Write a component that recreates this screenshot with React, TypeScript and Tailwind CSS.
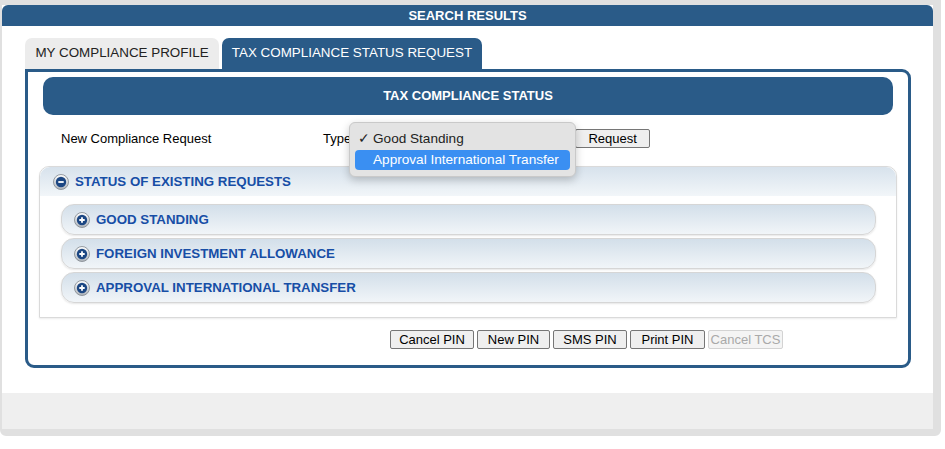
import React from "react";

const REQUESTS = ["GOOD STANDING", "FOREIGN INVESTMENT ALLOWANCE", "APPROVAL INTERNATIONAL TRANSFER"];
const PIN_BUTTONS = [
  { label: "Cancel PIN", w: "w-[84px]" },
  { label: "New PIN", w: "w-[73px]" },
  { label: "SMS PIN", w: "w-[74px]" },
  { label: "Print PIN", w: "w-[75px]" },
];

function ToggleIcon({ open }: { open: boolean }) {
  const id = open ? "ringOpen" : "ringShut";
  return (
    <svg viewBox="0 0 16 16" width="16" height="16" className="w-[16px] h-[16px] flex-shrink-0">
      <defs>
        <linearGradient id={id} x1="0" y1="0" x2="0" y2="1">
          <stop offset="0" stopColor="#ffffff" />
          <stop offset="1" stopColor="#aeb4bb" />
        </linearGradient>
      </defs>
      <circle cx="8" cy="8" r="7.5" fill={`url(#${id})`} stroke="#7f858c" strokeWidth="0.8" />
      <circle cx="8" cy="8" r="5.2" fill="#1c4783" />
      <path d={open ? "M5.3 8h5.4" : "M5.3 8h5.4M8 5.3v5.4"} stroke="#fff" strokeWidth="1.8" />
    </svg>
  );
}

function Btn({ label, disabled, w }: { label: string; disabled?: boolean; w: string }) {
  return (
    <button
      disabled={disabled}
      className={`${w} h-[19px] text-[13px] leading-none rounded-[2px] border ${
        disabled ? "border-[#d3d3d3] text-[#a9a9a9] bg-[#f4f4f4]" : "border-[#767676] text-black bg-[#efefef]"
      }`}
    >
      {label}
    </button>
  );
}

export default function App() {
  return (
    <div className="bg-white" style={{ fontFamily: "'Liberation Sans', Arial, sans-serif" }}>
      <div className="w-[941px] border-t-[5px] border-l-2 border-r-8 border-b-[7px] border-[#e0e0e0] rounded-b-[6px]">
        <div className="h-[21px] bg-[#2a5b88] rounded-t-[6px] flex items-center justify-center text-white text-[13px] font-bold">
          SEARCH RESULTS
        </div>

        <div className="px-[23px] pt-[12px] pb-[25px] bg-white">
          {/* tabs */}
          <div className="flex gap-[3px]">
            <div className="w-[194px] h-[31px] bg-[#ececec] rounded-t-[7px] flex items-center justify-center text-[13.4px] text-[#222]">
              MY COMPLIANCE PROFILE
            </div>
            <div className="w-[260px] h-[31px] bg-[#2a5b88] rounded-t-[7px] flex items-center justify-center text-[13.4px] text-white">
              TAX COMPLIANCE STATUS REQUEST
            </div>
          </div>

          {/* panel */}
          <div className="w-[886px] h-[299px] border-[3px] border-[#2a5b88] rounded-b-[9px] rounded-tr-[9px] px-[11px] pt-[5px]">
            <div className="mx-[4px] h-[38px] bg-[#2a5b88] rounded-[10px] flex items-center justify-center text-white text-[13px] font-bold">
              TAX COMPLIANCE STATUS
            </div>

            <div className="relative mt-[14px] h-[19px] flex items-center text-[13px] text-black">
              <span className="ml-[22px] w-[262px]">New Compliance Request</span>
              <span>Type</span>
              <div className="ml-[6px] w-[218px] h-[19px]" />
              <Btn label="Request" w="w-[75px]" />
              {/* open select menu */}
              <div className="absolute left-[310px] top-[-7px] w-[227px] h-[55px] bg-[#e3e3e3] border border-[#c9c9c9] rounded-[6px] shadow-[0_3px_8px_rgba(0,0,0,0.22)] px-[5px] pt-[6px] text-[13.6px]">
                <div className="h-[21px] flex items-center pl-[3px] text-[#222]">
                  <span className="w-[15px]">✓</span>Good Standing
                </div>
                <div className="h-[20px] flex items-center pl-[18px] bg-[#3a8ff2] rounded-[4px] text-white">
                  Approval International Transfer
                </div>
              </div>
            </div>

            {/* accordion */}
            <div className="mt-[18px] h-[152px] border border-[#dadada] rounded-t-[10px] shadow-[0_1px_2px_rgba(0,0,0,0.08)]">
              <div className="h-[29px] rounded-t-[10px] bg-gradient-to-b from-[#d7e2ec] to-[#f2f6f9] flex items-center gap-[6px] pl-[13px]">
                <ToggleIcon open />
                <span className="text-[13.3px] font-bold text-[#174ea6]">STATUS OF EXISTING REQUESTS</span>
              </div>
              <div className="pl-[21px] pr-[20px] pt-[8px] flex flex-col gap-[3px]">
                {REQUESTS.map((r) => (
                  <div
                    key={r}
                    className="h-[31px] rounded-[13px] border border-[#d6d6d6] bg-gradient-to-b from-[#d3dfea] to-[#f1f5f8] shadow-[0_1px_2px_rgba(0,0,0,0.1)] flex items-center gap-[6px] pl-[12px]"
                  >
                    <ToggleIcon open={false} />
                    <span className="text-[13.3px] font-bold text-[#174ea6]">{r}</span>
                  </div>
                ))}
              </div>
            </div>

            {/* pin buttons */}
            <div className="mt-[12px] ml-[351px] flex gap-[3px]">
              {PIN_BUTTONS.map((b) => (
                <Btn key={b.label} label={b.label} w={b.w} />
              ))}
              <Btn label="Cancel TCS" w="w-[75px]" disabled />
            </div>
          </div>
        </div>

        <div className="h-[36px] bg-[#efefef]" />
      </div>
    </div>
  );
}
